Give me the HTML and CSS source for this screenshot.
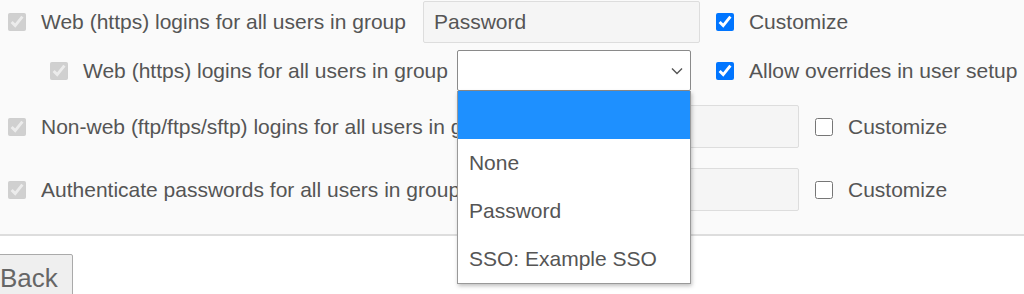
FILE: index.html
```html
<!DOCTYPE html>
<html>
<head>
    <title>Login methods</title>
    <link rel="stylesheet" href="styles.css">
</head>
<body>
    <div class="panel">
        <div class="row row-first">
            <input type="checkbox" class="check" checked disabled>
            <span class="label">Web (https) logins for all users in group</span>
            <div class="field">Password</div>
            <input type="checkbox" class="check" checked>
            <span class="label">Customize</span>
        </div>

        <div class="row row-sub">
            <input type="checkbox" class="check" checked disabled>
            <span class="label label-sub">Web (https) logins for all users in group</span>
            <div class="select-wrap">
                <div class="select">
                    <svg width="12" height="8" viewBox="0 0 12 8">
                        <path d="M1 1.5 L6 6.5 L11 1.5" fill="none" stroke="#555" stroke-width="1.4"/>
                    </svg>
                </div>
                <ul class="options">
                    <li class="selected"></li>
                    <li>None</li>
                    <li>Password</li>
                    <li>SSO: Example SSO</li>
                </ul>
            </div>
            <input type="checkbox" class="check" checked>
            <span class="label">Allow overrides in user setup</span>
        </div>

        <div class="row row-third">
            <input type="checkbox" class="check" checked disabled>
            <span class="label label-wide">Non-web (ftp/ftps/sftp) logins for all users in group</span>
            <div class="field"></div>
            <input type="checkbox" class="check">
            <span class="label">Customize</span>
        </div>

        <div class="row row-fourth">
            <input type="checkbox" class="check" checked disabled>
            <span class="label label-wide">Authenticate passwords for all users in group</span>
            <div class="field"></div>
            <input type="checkbox" class="check">
            <span class="label">Customize</span>
        </div>
    </div>

    <div class="footer">
        <button class="back">Back</button>
    </div>
</body>
</html>
```

FILE: styles.css
```css
body {
    margin: 0;
    font-family: "Liberation Sans", Arial, sans-serif;
    font-size: 21px;
    color: #555;
    background-color: #fff;
}

.panel {
    background-color: #fafafa;
    border-bottom: 2px solid #ddd;
    padding: 1px 0 0 8px;
    height: 233px;
}

.row {
    display: flex;
    align-items: center;
}

.row > * {
    flex-shrink: 0;
}

.row-sub {
    margin-top: 7px;
    padding-left: 42px;
}

.row-third {
    margin-top: 14px;
}

.row-fourth {
    margin-top: 20px;
}

.check {
    width: 18px;
    height: 18px;
    margin: 0 15px 0 0;
}

.label {
    margin-right: 17px;
    white-space: nowrap;
}

.label-sub {
    margin-right: 9px;
}

.label-wide {
    width: 464px;
    overflow: hidden;
}

.field {
    box-sizing: border-box;
    width: 277px;
    height: 42px;
    border: 1px solid #ddd;
    border-radius: 2px;
    background-color: #f5f5f5;
    padding: 0 10px;
    line-height: 40px;
    margin-right: 16px;
}

.row-third .field,
.row-fourth .field {
    height: 43px;
}

.select-wrap {
    position: relative;
    margin-right: 25px;
}

.select {
    box-sizing: border-box;
    width: 234px;
    height: 41px;
    border: 1px solid #8a8a8a;
    border-radius: 2px;
    background-color: #fff;
    display: flex;
    align-items: center;
    justify-content: flex-end;
    padding-right: 7px;
}

.options {
    position: absolute;
    top: 41px;
    left: 0;
    z-index: 2;
    box-sizing: border-box;
    width: 234px;
    margin: 0;
    padding: 0;
    list-style: none;
    background-color: #fff;
    border: 1px solid #999;
    border-top: none;
    box-shadow: 1px 2px 4px rgba(0, 0, 0, 0.25);
}

.options li {
    height: 48px;
    line-height: 48px;
    padding-left: 11px;
}

.options li.selected {
    background-color: #1e90ff;
}

.footer {
    padding-top: 18px;
}

.back {
    margin-left: -15px;
    font-family: "Liberation Sans", Arial, sans-serif;
    font-size: 26px;
    color: #666;
    background-color: #efefef;
    border: 1px solid #aaa;
    border-radius: 2px;
    padding: 8px 14px;
}
```
